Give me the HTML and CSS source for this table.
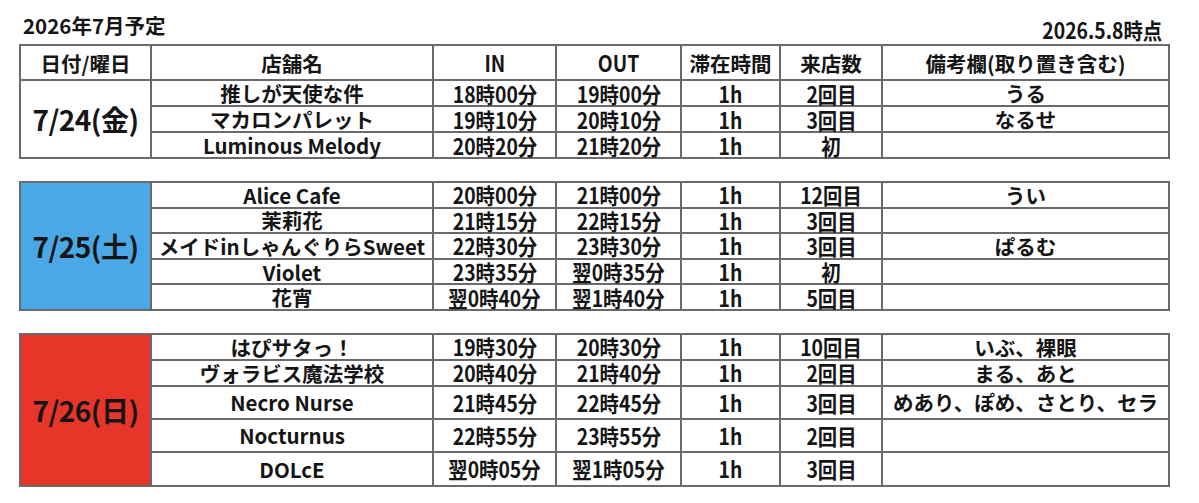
FILE: index.html
```html
<!DOCTYPE html>
<html lang="ja">
<head>
<meta charset="utf-8">
<title>2026年7月予定</title>
<link rel="stylesheet" href="styles.css">
</head>
<body>
<div class="page">
  <div class="title-row">
    <div class="title">2026年7月予定</div>
    <div class="asof"><span class="n">2026.5.8時点</span></div>
  </div>

  <table class="sched">
    <colgroup>
      <col class="c-date"><col class="c-shop"><col class="c-in"><col class="c-out"><col class="c-stay"><col class="c-visit"><col class="c-note">
    </colgroup>
    <tr class="head">
      <th>日付/曜日</th><th>店舗名</th><th><span class="n">IN</span></th><th><span class="n">OUT</span></th><th>滞在時間</th><th>来店数</th><th>備考欄(取り置き含む)</th>
    </tr>
    <tr class="r26">
      <td class="date" rowspan="3">7/24(金)</td>
      <td>推しが天使な件</td><td><span class="n">18時00分</span></td><td><span class="n">19時00分</span></td><td><span class="n">1h</span></td><td><span class="n">2回目</span></td><td>うる</td>
    </tr>
    <tr class="r26">
      <td>マカロンパレット</td><td><span class="n">19時10分</span></td><td><span class="n">20時10分</span></td><td><span class="n">1h</span></td><td><span class="n">3回目</span></td><td>なるせ</td>
    </tr>
    <tr class="r26">
      <td>Luminous Melody</td><td><span class="n">20時20分</span></td><td><span class="n">21時20分</span></td><td><span class="n">1h</span></td><td><span class="n">初</span></td><td></td>
    </tr>
  </table>

  <table class="sched">
    <colgroup>
      <col class="c-date"><col class="c-shop"><col class="c-in"><col class="c-out"><col class="c-stay"><col class="c-visit"><col class="c-note">
    </colgroup>
    <tr class="r25">
      <td class="date sat" rowspan="5">7/25(土)</td>
      <td>Alice Cafe</td><td><span class="n">20時00分</span></td><td><span class="n">21時00分</span></td><td><span class="n">1h</span></td><td><span class="n">12回目</span></td><td>うい</td>
    </tr>
    <tr class="r25">
      <td>茉莉花</td><td><span class="n">21時15分</span></td><td><span class="n">22時15分</span></td><td><span class="n">1h</span></td><td><span class="n">3回目</span></td><td></td>
    </tr>
    <tr class="r25">
      <td>メイドinしゃんぐりらSweet</td><td><span class="n">22時30分</span></td><td><span class="n">23時30分</span></td><td><span class="n">1h</span></td><td><span class="n">3回目</span></td><td>ぱるむ</td>
    </tr>
    <tr class="r25">
      <td>Violet</td><td><span class="n">23時35分</span></td><td><span class="n">翌0時35分</span></td><td><span class="n">1h</span></td><td><span class="n">初</span></td><td></td>
    </tr>
    <tr class="r25">
      <td>花宵</td><td><span class="n">翌0時40分</span></td><td><span class="n">翌1時40分</span></td><td><span class="n">1h</span></td><td><span class="n">5回目</span></td><td></td>
    </tr>
  </table>

  <table class="sched">
    <colgroup>
      <col class="c-date"><col class="c-shop"><col class="c-in"><col class="c-out"><col class="c-stay"><col class="c-visit"><col class="c-note">
    </colgroup>
    <tr class="r26">
      <td class="date sun" rowspan="5">7/26(日)</td>
      <td>はぴサタっ！</td><td><span class="n">19時30分</span></td><td><span class="n">20時30分</span></td><td><span class="n">1h</span></td><td><span class="n">10回目</span></td><td>いぶ、裸眼</td>
    </tr>
    <tr class="r25">
      <td>ヴォラビス魔法学校</td><td><span class="n">20時40分</span></td><td><span class="n">21時40分</span></td><td><span class="n">1h</span></td><td><span class="n">2回目</span></td><td>まる、あと</td>
    </tr>
    <tr class="r33">
      <td>Necro Nurse</td><td><span class="n">21時45分</span></td><td><span class="n">22時45分</span></td><td><span class="n">1h</span></td><td><span class="n">3回目</span></td><td>めあり、ぽめ、さとり、セラ</td>
    </tr>
    <tr class="r34">
      <td>Nocturnus</td><td><span class="n">22時55分</span></td><td><span class="n">23時55分</span></td><td><span class="n">1h</span></td><td><span class="n">2回目</span></td><td></td>
    </tr>
    <tr class="r34">
      <td>DOLcE</td><td><span class="n">翌0時05分</span></td><td><span class="n">翌1時05分</span></td><td><span class="n">1h</span></td><td><span class="n">3回目</span></td><td></td>
    </tr>
  </table>
</div>
</body>
</html>
```

FILE: styles.css
```css
html, body {
  margin: 0;
  padding: 0;
  background: #ffffff;
}

body {
  font-family: "Noto Sans CJK JP", "Noto Sans", sans-serif;
  font-weight: 700;
  color: #151515;
}

.page {
  width: 1149px;
  padding: 12px 0 0 19px;
}

.title-row {
  display: flex;
  justify-content: space-between;
  align-items: flex-end;
  height: 32px;
}

.title {
  align-self: flex-start;
  padding-left: 4px;
  font-size: 20.5px;
  line-height: 26px;
}

.asof {
  padding-right: 6px;
  padding-bottom: 2px;
  font-size: 21px;
  line-height: 24px;
}

.n {
  display: inline-block;
  font-size: 22px;
  line-height: 20px;
  transform: scaleX(0.88);
  transform-origin: center;
}

.asof .n {
  font-size: 22px;
  line-height: 24px;
  transform-origin: right center;
}

.sched {
  width: 1149px;
  border-collapse: collapse;
  table-layout: fixed;
  margin-bottom: 22px;
}

.c-date { width: 131px; }
.c-shop { width: 282px; }
.c-in { width: 123px; }
.c-out { width: 125px; }
.c-stay { width: 99px; }
.c-visit { width: 102px; }
.c-note { width: 287px; }

.sched th,
.sched td {
  border: 2px solid #6a6a6a;
  padding: 0;
  text-align: center;
  vertical-align: middle;
  font-size: 20.5px;
  line-height: 20px;
  font-weight: 700;
  white-space: nowrap;
}

.head th { height: 33px; }
.r25 td { height: 23.6px; }
.r26 td { height: 24px; }
.r33 td { height: 31px; }
.r34 td { height: 31.5px; }

.sched td.date {
  font-size: 28px;
  line-height: 32px;
  letter-spacing: -0.5px;
}

.sched td.sat { background: #4aa8e6; }
.sched td.sun { background: #e8352a; }
```
